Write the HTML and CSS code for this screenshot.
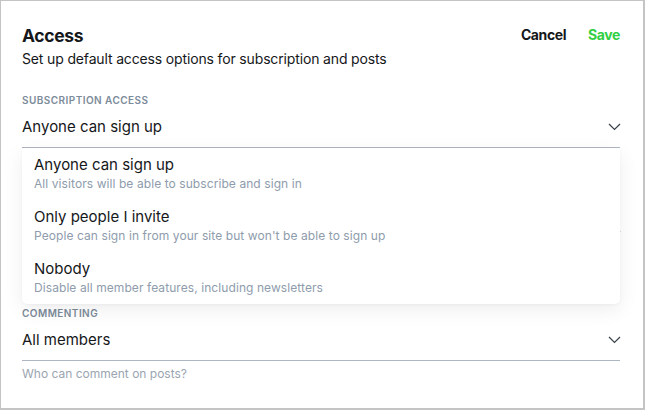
FILE: index.html
```html
<!DOCTYPE html>
<html lang="en">
<head>
<meta charset="utf-8">
<title>Access</title>
<link rel="stylesheet" href="styles.css">
</head>
<body>
<div class="frame">
  <div class="header">
    <div class="heading">
      <h1 class="title">Access</h1>
      <p class="subtitle">Set up default access options for subscription and posts</p>
    </div>
    <div class="actions">
      <button class="btn btn-cancel">Cancel</button>
      <button class="btn btn-save">Save</button>
    </div>
  </div>

  <div class="fields">
    <div class="field">
      <div class="label">Subscription access</div>
      <div class="select-wrap">
        <div class="select">
          <span class="select-value">Anyone can sign up</span>
          <svg class="chevron" width="13" height="8" viewBox="0 0 13 8"><polyline points="1,1 6.5,6.5 12,1" fill="none" stroke="#394047" stroke-width="1.2"/></svg>
        </div>
        <div class="menu">
          <div class="option">
            <div class="option-title">Anyone can sign up</div>
            <div class="option-desc">All visitors will be able to subscribe and sign in</div>
          </div>
          <div class="option">
            <div class="option-title">Only people I invite</div>
            <div class="option-desc">People can sign in from your site but won't be able to sign up</div>
          </div>
          <div class="option">
            <div class="option-title">Nobody</div>
            <div class="option-desc">Disable all member features, including newsletters</div>
          </div>
        </div>
      </div>
      <div class="hint"></div>
    </div>

    <div class="field">
      <div class="label"></div>
      <div class="select-wrap">
        <div class="select">
          <span class="select-value"></span>
          <svg class="chevron" width="13" height="8" viewBox="0 0 13 8"><polyline points="1,1 6.5,6.5 12,1" fill="none" stroke="#394047" stroke-width="1.2"/></svg>
        </div>
      </div>
      <div class="hint"></div>
    </div>

    <div class="field">
      <div class="label">Commenting</div>
      <div class="select-wrap">
        <div class="select">
          <span class="select-value">All members</span>
          <svg class="chevron" width="13" height="8" viewBox="0 0 13 8"><polyline points="1,1 6.5,6.5 12,1" fill="none" stroke="#394047" stroke-width="1.2"/></svg>
        </div>
      </div>
      <div class="hint">Who can comment on posts?</div>
    </div>
  </div>
</div>
</body>
</html>
```
FILE: styles.css
```css
* { box-sizing: border-box; }

html, body {
  margin: 0;
  padding: 0;
  background: #ffffff;
}

body {
  font-family: Inter, "Noto Sans", sans-serif;
  color: #15171a;
}

.frame {
  width: 645px;
  height: 410px;
  border-style: solid;
  border-color: #c4c4c4;
  border-width: 1px 2px 2px 1px;
  padding: 23px 23px 0 21px;
  overflow: hidden;
}

.header {
  display: flex;
  justify-content: space-between;
  align-items: flex-start;
}

.title {
  margin: 0;
  font-size: 17.5px;
  line-height: 24px;
  font-weight: 700;
  letter-spacing: -0.35px;
}

.subtitle {
  margin: 1px 0 0;
  font-size: 14px;
  line-height: 20px;
  letter-spacing: -0.15px;
  color: #15171a;
}

.actions {
  display: flex;
  gap: 22px;
  margin-top: 1px;
}

.btn {
  border: 0;
  background: none;
  padding: 0;
  font-family: inherit;
  font-size: 14px;
  line-height: 20px;
  font-weight: 700;
  letter-spacing: -0.4px;
  cursor: pointer;
}

.btn-cancel { color: #15171a; }
.btn-save { color: #30cf43; }

.fields {
  margin-top: 24px;
  display: flex;
  flex-direction: column;
  gap: 30.5px;
}

.label {
  min-height: 14px;
  font-size: 10px;
  line-height: 14px;
  font-weight: 600;
  letter-spacing: 0.45px;
  text-transform: uppercase;
  color: #7c8b9a;
}

.select-wrap {
  position: relative;
}

.select {
  height: 41px;
  display: flex;
  align-items: center;
  justify-content: space-between;
  border-bottom: 1px solid #aeb7c1;
}

.select-value {
  font-size: 15px;
  line-height: 22px;
}

.chevron {
  display: block;
  margin-right: -1px;
}

.hint {
  min-height: 16px;
  margin-top: 5px;
  font-size: 12px;
  line-height: 16px;
  color: #9aa5b1;
}

.menu {
  position: absolute;
  top: 100%;
  left: 0;
  right: 0;
  z-index: 10;
  background: #ffffff;
  border-radius: 0 0 5px 5px;
  box-shadow: 0 6px 20px rgba(0, 0, 0, 0.07), 0 1px 3px rgba(0, 0, 0, 0.04);
}

.option {
  padding: 6.5px 12px 7.5px;
}

.option-title {
  font-size: 15px;
  line-height: 20px;
  color: #15171a;
}

.option-desc {
  font-size: 12px;
  line-height: 18px;
  letter-spacing: 0.08px;
  color: #8e9cac;
}
```
